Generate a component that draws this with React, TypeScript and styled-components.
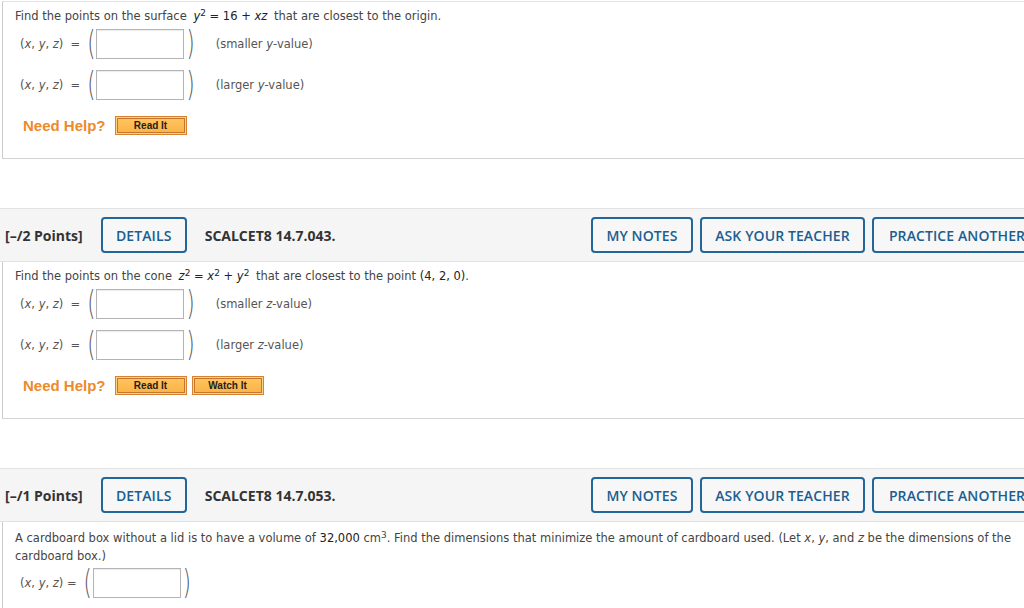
import styled, { createGlobalStyle } from "styled-components";

const GlobalStyle = createGlobalStyle`
  html, body {
    margin: 0;
    padding: 0;
    background: #ffffff;
    overflow: hidden;
  }
`;

const Page = styled.div`
  width: 1044px;
  padding-top: 1px;
  font-family: "DejaVu Sans", Verdana, sans-serif;
`;

const Panel = styled.div<{ $top?: number; $bordered?: boolean }>`
  margin-left: 2px;
  border-left: 1px solid #cccccc;
  border-bottom: 1px solid #d4d4d4;
  border-top: ${(p) => (p.$bordered ? "1px solid #e4e4e4" : "none")};
  padding: ${(p) => p.$top ?? 6}px 0 23px 12px;
`;

const LastPanel = styled(Panel)`
  border-bottom: none;
  padding-bottom: 10px;
`;

const Question = styled.div<{ $lh?: number }>`
  font-size: 11.5px;
  line-height: ${(p) => p.$lh ?? 16}px;
  color: #444444;
  padding-right: 16px;
`;

const Math = styled.span`
  color: #222222;
  margin: 0 3px;
`;

const Num = styled.span`
  color: #222222;
`;

const Sup = styled.sup`
  font-size: 0.78em;
  line-height: 0;
  vertical-align: baseline;
  position: relative;
  top: -0.5em;
`;

const Row = styled.div<{ $gap?: number }>`
  display: flex;
  align-items: center;
  height: 30px;
  margin-top: ${(p) => p.$gap ?? 5}px;
  padding-left: 5px;
  font-size: 11.5px;
  color: #555555;
`;

const Label = styled.span<{ $tight?: boolean }>`
  white-space: pre;
  margin-right: ${(p) => (p.$tight ? 7 : 7)}px;
`;

const Paren = styled.span`
  display: inline-block;
  font-family: "DejaVu Sans", sans-serif;
  font-weight: 200;
  font-size: 21px;
  line-height: 30px;
  color: #555555;
  transform: scaleY(1.6);
`;

const AnswerBox = styled.div`
  width: 86px;
  height: 28px;
  border: 1px solid #b4b4b4;
  box-shadow: inset 0 1px 1px rgba(0, 0, 0, 0.08);
  background: #ffffff;
  margin: 0 2px 0 1px;
`;

const Note = styled.span`
  margin-left: 21px;
`;

const HelpRow = styled.div`
  display: flex;
  align-items: center;
  gap: 5px;
  margin-top: 16px;
  padding-left: 8px;
  height: 19px;
`;

const HelpText = styled.span`
  font-family: "Liberation Sans", Arial, sans-serif;
  font-weight: bold;
  font-size: 15px;
  color: #ec8a2c;
  margin-right: 4px;
`;

const HelpButton = styled.div<{ $w?: number }>`
  width: ${(p) => p.$w ?? 68}px;
  height: 15px;
  border: 1px solid #d9812c;
  background: #fdc468;
  padding: 1px;
  box-sizing: content-box;
  display: flex;
  box-shadow: inset 0 0 0 1px #fbd38a;
`;

const HelpInner = styled.div`
  flex: 1;
  border: 1px solid #c4782f;
  background: linear-gradient(#ffc35f, #fbb447);
  display: flex;
  align-items: center;
  justify-content: center;
  font-family: "Liberation Sans", Arial, sans-serif;
  font-weight: bold;
  font-size: 10px;
  color: #1e1e1e;
`;

const Gap = styled.div`
  height: 49px;
`;

const Header = styled.div`
  display: flex;
  align-items: center;
  justify-content: space-between;
  height: 52px;
  box-sizing: content-box;
  background: #f5f5f5;
  border-top: 1px solid #e2e2e2;
  border-bottom: 1px solid #e2e2e2;
  padding: 0 2px 0 5px;
  font-family: "Open Sans", sans-serif;
`;

const HeaderGroup = styled.div<{ $gap: number }>`
  display: flex;
  align-items: center;
  gap: ${(p) => p.$gap}px;
`;

const HeaderText = styled.span`
  font-weight: 700;
  font-size: 14px;
  color: #333333;
`;

const OutlineButton = styled.div<{ $w: number }>`
  width: ${(p) => p.$w}px;
  height: 36px;
  box-sizing: border-box;
  border: 2px solid #22669a;
  border-radius: 4px;
  display: flex;
  align-items: center;
  justify-content: center;
  font-weight: 600;
  font-size: 14px;
  color: #1b5e91;
  background: #f7f7f7;
  letter-spacing: 0.1px;
`;

function Xyz() {
  return (
    <>
      (<i>x</i>, <i>y</i>, <i>z</i>)
    </>
  );
}

function AnswerRow({ note, gap, tight }: { note?: React.ReactNode; gap?: number; tight?: boolean }) {
  return (
    <Row $gap={gap}>
      <Label $tight={tight}>
        <Xyz />
        {tight ? " =" : "  ="}
      </Label>
      <Paren>(</Paren>
      <AnswerBox />
      <Paren>)</Paren>
      {note && <Note>{note}</Note>}
    </Row>
  );
}

function Help({ watch }: { watch?: boolean }) {
  return (
    <HelpRow>
      <HelpText>Need Help?</HelpText>
      <HelpButton>
        <HelpInner>Read It</HelpInner>
      </HelpButton>
      {watch && (
        <HelpButton>
          <HelpInner>Watch It</HelpInner>
        </HelpButton>
      )}
    </HelpRow>
  );
}

function QuestionHeader({ points, code }: { points: string; code: string }) {
  return (
    <Header>
      <HeaderGroup $gap={18}>
        <HeaderText>{points}</HeaderText>
        <OutlineButton $w={86}>DETAILS</OutlineButton>
        <HeaderText>{code}</HeaderText>
      </HeaderGroup>
      <HeaderGroup $gap={7}>
        <OutlineButton $w={102}>MY NOTES</OutlineButton>
        <OutlineButton $w={165}>ASK YOUR TEACHER</OutlineButton>
        <OutlineButton $w={170}>PRACTICE ANOTHER</OutlineButton>
      </HeaderGroup>
    </Header>
  );
}

export default function App() {
  return (
    <Page>
      <GlobalStyle />
      <Panel $bordered>
        <Question>
          Find the points on the surface
          <Math>
            {" "}
            <i>y</i>
            <Sup>2</Sup> = 16 + <i>xz</i>{" "}
          </Math>
          that are closest to the origin.
        </Question>
        <AnswerRow
          note={
            <>
              (smaller <i>y</i>-value)
            </>
          }
        />
        <AnswerRow
          gap={11}
          note={
            <>
              (larger <i>y</i>-value)
            </>
          }
        />
        <Help />
      </Panel>

      <Gap />
      <QuestionHeader points="[–/2 Points]" code="SCALCET8 14.7.043." />
      <Panel $top={6}>
        <Question>
          Find the points on the cone
          <Math>
            {" "}
            <i>z</i>
            <Sup>2</Sup> = <i>x</i>
            <Sup>2</Sup> + <i>y</i>
            <Sup>2</Sup>{" "}
          </Math>
          that are closest to the point <Num>(4, 2, 0)</Num>.
        </Question>
        <AnswerRow
          note={
            <>
              (smaller <i>z</i>-value)
            </>
          }
        />
        <AnswerRow
          gap={11}
          note={
            <>
              (larger <i>z</i>-value)
            </>
          }
        />
        <Help watch />
      </Panel>

      <Gap />
      <QuestionHeader points="[–/1 Points]" code="SCALCET8 14.7.053." />
      <LastPanel $top={7}>
        <Question $lh={18}>
          A cardboard box without a lid is to have a volume of <Num>32,000</Num> cm
          <Sup>3</Sup>. Find the dimensions that minimize the amount of cardboard used. (Let{" "}
          <i>x</i>, <i>y</i>, and <i>z</i> be the dimensions of the cardboard box.)
        </Question>
        <AnswerRow gap={3} tight />
      </LastPanel>
    </Page>
  );
}
